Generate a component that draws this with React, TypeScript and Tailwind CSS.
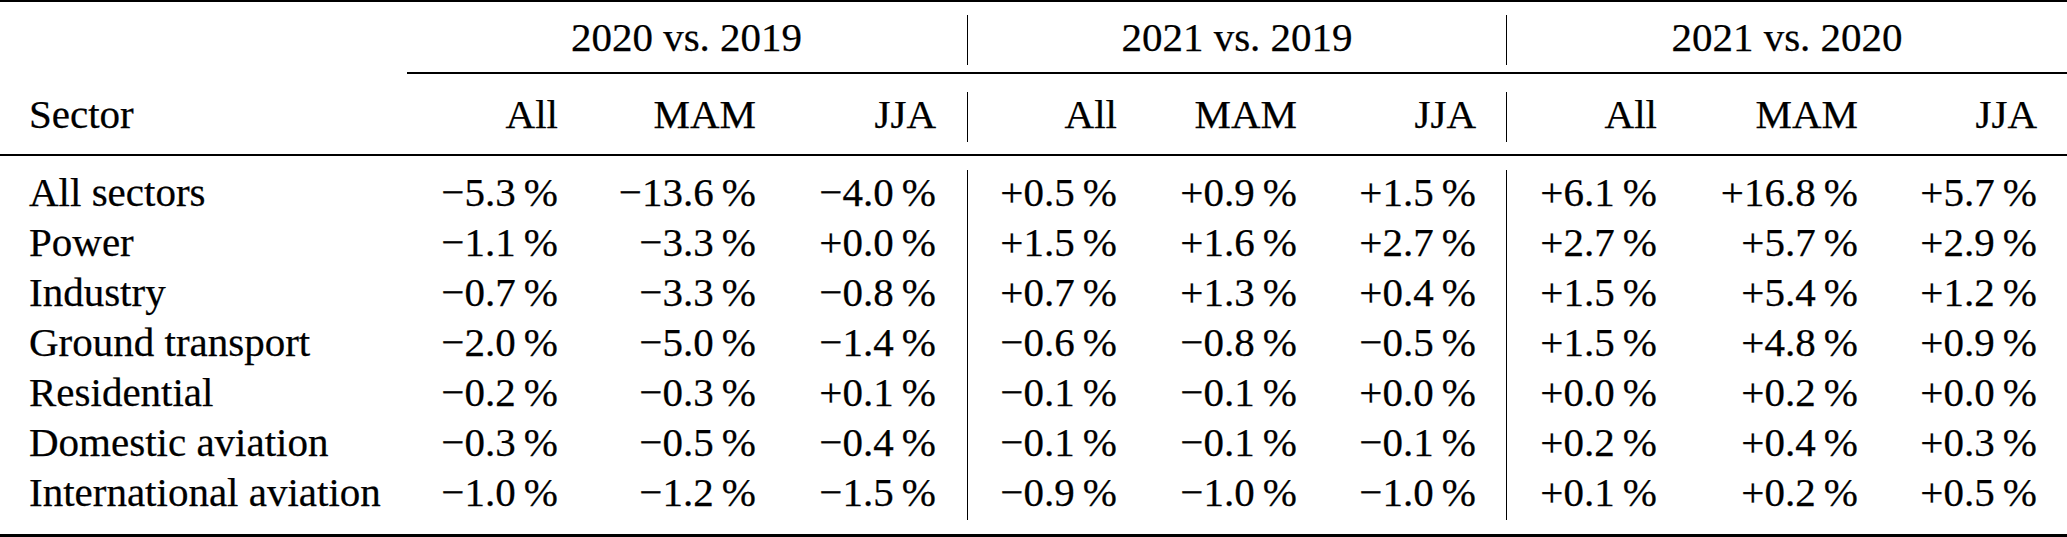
import React from "react";

const GRID =
  "grid grid-cols-[407px_151px_198px_211px_150px_180px_209px_151px_201px_209px]";

const rows: string[][] = [
  ["All sectors", "−5.3", "−13.6", "−4.0", "+0.5", "+0.9", "+1.5", "+6.1", "+16.8", "+5.7"],
  ["Power", "−1.1", "−3.3", "+0.0", "+1.5", "+1.6", "+2.7", "+2.7", "+5.7", "+2.9"],
  ["Industry", "−0.7", "−3.3", "−0.8", "+0.7", "+1.3", "+0.4", "+1.5", "+5.4", "+1.2"],
  ["Ground transport", "−2.0", "−5.0", "−1.4", "−0.6", "−0.8", "−0.5", "+1.5", "+4.8", "+0.9"],
  ["Residential", "−0.2", "−0.3", "+0.1", "−0.1", "−0.1", "+0.0", "+0.0", "+0.2", "+0.0"],
  ["Domestic aviation", "−0.3", "−0.5", "−0.4", "−0.1", "−0.1", "−0.1", "+0.2", "+0.4", "+0.3"],
  ["International aviation", "−1.0", "−1.2", "−1.5", "−0.9", "−1.0", "−1.0", "+0.1", "+0.2", "+0.5"],
];

const cellCls = [
  "pl-[29px] text-left",
  "text-right",
  "text-right",
  "text-right pr-[31px]",
  "text-right border-l-[1.5px] border-black",
  "text-right",
  "text-right pr-[30px]",
  "text-right border-l-[1.5px] border-black",
  "text-right",
  "text-right pr-[30px]",
];

const heads = ["Sector", "All", "MAM", "JJA", "All", "MAM", "JJA", "All", "MAM", "JJA"];

export default function App() {
  return (
    <div className="w-[2067px] h-[537px] bg-white text-black [font-family:'Liberation_Serif','Times_New_Roman',serif] text-[41px] leading-[44px] [-webkit-text-stroke:0.25px_black] flex flex-col whitespace-nowrap">
      {/* top rule */}
      <div className="h-[2px] bg-black" />

      {/* header row 1 */}
      <div className={`${GRID} mt-[13px] h-[50px]`}>
        <div />
        <div className="col-span-3 pl-[30px] pr-[31px] text-center">2020 vs. 2019</div>
        <div className="col-span-3 pl-[30px] pr-[30px] text-center border-l-[1.5px] border-black">
          2021 vs. 2019
        </div>
        <div className="col-span-3 pl-[30px] pr-[30px] text-center border-l-[1.5px] border-black">
          2021 vs. 2020
        </div>
      </div>

      {/* partial rule */}
      <div className="mt-[7px] ml-[407px] h-[2px] bg-black" />

      {/* header row 2 */}
      <div className={`${GRID} mt-[18px] h-[50px]`}>
        {heads.map((h, i) => (
          <div key={i} className={cellCls[i]}>
            {h}
          </div>
        ))}
      </div>

      {/* mid rule */}
      <div className="mt-[12px] h-[2px] bg-black" />

      {/* data */}
      <div className="mt-[14px] flex flex-col">
        {rows.map((r, ri) => (
          <div key={ri} className={`${GRID} h-[50px]`}>
            {r.map((v, i) => (
              <div key={i} className={cellCls[i]}>
                {i === 0 ? v : `${v}\u2009%`}
              </div>
            ))}
          </div>
        ))}
      </div>

      {/* bottom rule */}
      <div className="mt-[14px] h-[3px] bg-black" />
    </div>
  );
}
